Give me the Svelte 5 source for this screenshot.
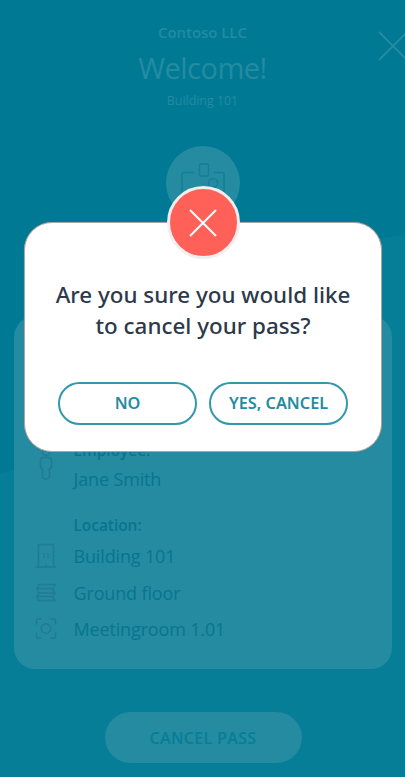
<script>
  const places = [
    { icon: 'building', label: 'Building 101' },
    { icon: 'floors', label: 'Ground floor' },
    { icon: 'room', label: 'Meetingroom 1.01' }
  ];
</script>

<main class="screen">
  <svg class="wave" viewBox="0 0 405 777" aria-hidden="true">
    <path d="M0 473C70 460 100 410 155 345C220 270 310 246 405 235V777H0Z" fill="#067e98" />
  </svg>

  <svg class="close" viewBox="0 0 30 30" aria-hidden="true">
    <path d="M1 1 29 29M29 1 1 29" />
  </svg>

  <header>
    <div class="company">Contoso LLC</div>
    <h1>Welcome!</h1>
    <div class="site">Building 101</div>
  </header>

  <div class="pass-icon">
    <svg width="44" height="44" viewBox="0 0 44 44" aria-hidden="true">
      <path d="M12.500 12.500H3Q1 12.500 1 14.500V38Q1 40 3 40H41Q43 40 43 38V14.500Q43 12.500 41 12.500H32.500" />
      <rect x="18.500" y="4" width="9" height="12" rx="1" />
      <circle cx="32" cy="23" r="4.500" />
      <path d="M25 35Q25 29 32 29T39 35" />
    </svg>
  </div>

  <section class="card">
    <div class="row person">
      <svg class="icon" width="24" height="40" viewBox="0 0 24 40" aria-hidden="true">
        <circle cx="12" cy="7" r="3.500" />
        <path d="M9 12.500H15Q17.500 13 17.500 16V21Q17.500 23.500 15.500 24V31Q15.500 34 12 34T8.500 31V24Q6.500 23.500 6.500 21V16Q6.500 13 9 12.500Z" />
      </svg>
      <div class="details">
        <div class="caption">Employee:</div>
        <div class="value">Jane Smith</div>
      </div>
    </div>
    <div class="caption location">Location:</div>
    {#each places as place}
      <div class="row place">
        <svg class="icon" width="24" height="28" viewBox="0 0 24 28" aria-hidden="true">
          {#if place.icon === 'building'}
            <path d="M4.500 24.500V2.500H19.500V24.500M2 25H22" />
            <path d="M9 12H11M13 12H15M9 15H11M13 15H15" />
            <path d="M12 22.500V24.500" />
          {:else if place.icon === 'floors'}
            <path d="M5 5.500H21L19 9.500H3ZM3 10.500L5 14H21L19 10.500M21 14L19 17.500H3L5 14M3 18L5 21.500H21L19 18M3 21.500H19" />
          {:else}
            <path d="M2.500 9.500V5.500Q2.500 4 4 4H7.500M16.500 4H20Q21.500 4 21.500 5.500V9.500M21.500 17.500V21.500Q21.500 23 20 23H16.500M7.500 23H4Q2.500 23 2.500 21.500V17.500" />
            <circle cx="12" cy="13.500" r="4.700" />
          {/if}
        </svg>
        <div class="value">{place.label}</div>
      </div>
    {/each}
  </section>

  <button class="cancel-pass">CANCEL PASS</button>

  <div class="dialog" role="dialog" aria-modal="true">
    <div class="badge">
      <svg width="30" height="30" viewBox="0 0 30 30" aria-hidden="true">
        <path d="M2 2 28 28M28 2 2 28" />
      </svg>
    </div>
    <p>Are you sure you would like<br />to cancel your pass?</p>
    <div class="actions">
      <button>NO</button>
      <button>YES, CANCEL</button>
    </div>
  </div>
</main>

<style>
  :global(body) {
    margin: 0;
  }
  .screen {
    position: relative;
    box-sizing: border-box;
    width: 405px;
    height: 777px;
    overflow: hidden;
    background: #007a94;
    display: flex;
    flex-direction: column;
    align-items: center;
    font-family: 'Open Sans', 'Noto Sans', sans-serif;
  }
  svg {
    fill: none;
    display: block;
  }
  .wave {
    position: absolute;
    inset: 0;
  }
  .close {
    position: absolute;
    left: 378px;
    top: 31px;
    width: 30px;
    height: 30px;
    stroke: #248ba1;
    stroke-width: 1.800;
  }
  header {
    height: 146px;
    text-align: center;
    color: #248ba1;
    position: relative;
    white-space: nowrap;
  }
  .company {
    margin-top: 22px;
    font-size: 14.900px;
    line-height: 20px;
    font-weight: 600;
  }
  h1 {
    margin: 6px 0 0;
    font-size: 29px;
    line-height: 40px;
    font-weight: 400;
    letter-spacing: -0.500px;
  }
  .site {
    margin-top: 4px;
    font-size: 12.400px;
    line-height: 18px;
  }
  .pass-icon {
    width: 74px;
    height: 74px;
    border-radius: 50%;
    background: #248ba1;
    display: flex;
    justify-content: center;
    padding-top: 14px;
    box-sizing: border-box;
    position: relative;
    flex: none;
  }
  .pass-icon svg {
    stroke: #117f98;
    stroke-width: 1.400;
  }
  .card {
    position: relative;
    box-sizing: border-box;
    width: 378px;
    height: 353px;
    margin-top: 96px;
    padding: 122px 19px 0 20px;
    border-radius: 21px;
    background: #248ba1;
    color: #08758f;
    flex: none;
  }
  .row {
    display: flex;
    align-items: center;
    gap: 16px;
  }
  .icon {
    stroke: #227b90;
    stroke-width: 1.500;
    flex: none;
  }
  .caption {
    font-size: 15.400px;
    line-height: 26px;
    font-weight: 600;
  }
  .value {
    font-size: 18px;
    line-height: 30px;
    letter-spacing: -0.150px;
    white-space: nowrap;
  }
  .person {
    height: 56px;
  }
  .person .icon {
    margin-bottom: 2px;
  }
  .location {
    margin: 19px 0 0 40px;
  }
  .place {
    height: 36.500px;
    padding-bottom: 1px;
    margin-top: -1px;
  }
  .cancel-pass {
    position: relative;
    width: 197px;
    height: 51px;
    margin: 43px 0 0 1px;
    border: 0;
    border-radius: 26px;
    background: #248ba1;
    color: #067e98;
    font: 600 16px 'Open Sans', sans-serif;
    letter-spacing: 0.350px;
    padding: 0;
    flex: none;
  }
  .dialog {
    position: absolute;
    left: 24px;
    top: 222px;
    width: 358px;
    height: 230px;
    box-sizing: border-box;
    border: 1px solid #a6a6a6;
    border-radius: 28px;
    background: #fff;
    display: flex;
    flex-direction: column;
    align-items: center;
    font-family: 'Noto Sans', sans-serif;
    box-shadow: 0 0 1px #777;
  }
  .badge {
    box-sizing: border-box;
    width: 73px;
    height: 73px;
    margin-top: -37px;
    border: 3px solid #efefef;
    border-radius: 50%;
    background: #ff6159;
    display: flex;
    align-items: center;
    justify-content: center;
    flex: none;
  }
  .badge svg {
    stroke: #fff;
    stroke-width: 2;
  }
  p {
    margin: 20px 0 0;
    font-size: 22.400px;
    line-height: 31px;
    font-weight: 500;
    text-align: center;
    color: #2c394b;
    white-space: nowrap;
  }
  .actions {
    display: flex;
    gap: 12px;
    margin-top: 41px;
  }
  .actions button {
    box-sizing: border-box;
    width: 139px;
    height: 43px;
    padding: 0 0 1px;
    border: 2px solid #3299ac;
    border-radius: 22px;
    background: #fff;
    color: #248ba1;
    font: 600 16.300px 'Noto Sans', sans-serif;
    white-space: nowrap;
  }
</style>
